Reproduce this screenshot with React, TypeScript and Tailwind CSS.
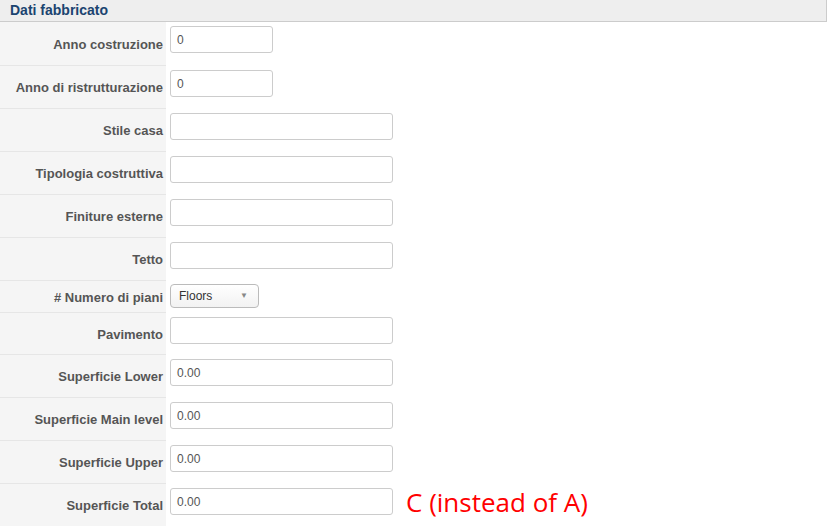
import React from "react";

type Row = { label: string; kind: "short" | "long" | "select"; value?: string; h: string };

const rows: Row[] = [
    { label: "Anno costruzione", kind: "short", value: "0", h: "h-[44px]" },
    { label: "Anno di ristrutturazione", kind: "short", value: "0", h: "h-[43px]" },
    { label: "Stile casa", kind: "long", h: "h-[43px]" },
    { label: "Tipologia costruttiva", kind: "long", h: "h-[43px]" },
    { label: "Finiture esterne", kind: "long", h: "h-[43px]" },
    { label: "Tetto", kind: "long", h: "h-[43px]" },
    { label: "# Numero di piani", kind: "select", h: "h-[32px]" },
    { label: "Pavimento", kind: "long", h: "h-[42px]" },
    { label: "Superficie Lower", kind: "long", value: "0.00", h: "h-[43px]" },
    { label: "Superficie Main level", kind: "long", value: "0.00", h: "h-[43px]" },
    { label: "Superficie Upper", kind: "long", value: "0.00", h: "h-[43px]" },
    { label: "Superficie Total", kind: "long", value: "0.00", h: "h-[43px]" },
];

function Field({ row }: { row: Row }) {
    if (row.kind === "select") {
        return (
            <div className="mt-[3px] w-[89px] h-[24px] border border-[#bbb] rounded-[4px] bg-gradient-to-b from-white to-[#f2f2f2] flex items-center justify-between pl-[8px] pr-[10px] text-[12px] text-[#333]">
                <span>Floors</span>
                <span className="text-[8px] text-[#888]">▼</span>
            </div>
        );
    }
    return (
        <div className={`mt-[4px] h-[27px] border border-[#ccc] rounded-[3px] bg-white flex items-center pl-[6px] text-[12px] text-[#555] ${row.kind === "short" ? "w-[103px]" : "w-[223px]"}`}>
            {row.value}
        </div>
    );
}

export default function App() {
    return (
        <div className="w-[827px] h-[526px] overflow-hidden bg-white font-['Liberation_Sans',Arial,sans-serif]">
            <div className="h-[22px] bg-[#eeeeee] border-b border-r border-[#cccccc] flex items-center pl-[10px] text-[14px] font-bold text-[#1b4470]">
                Dati fabbricato
            </div>
            {rows.map((row, i) => (
                <div key={i} className={`flex ${row.h}`}>
                    <div className="w-[166px] shrink-0 bg-[#f5f5f5] border-b border-[#e6e6e6] flex items-center justify-end pr-[3px] pt-[2px] text-[13px] font-bold text-[#555]">
                        {row.label}
                    </div>
                    <div className="pl-[4px] flex items-start">
                        <Field row={row} />
                        {i === rows.length - 1 && (
                            <span className="ml-[13px] mt-[1px] text-[26px] leading-[34px] text-[#ff0000] font-['Open_Sans',sans-serif]">
                                C (instead of A)
                            </span>
                        )}
                    </div>
                </div>
            ))}
        </div>
    );
}
